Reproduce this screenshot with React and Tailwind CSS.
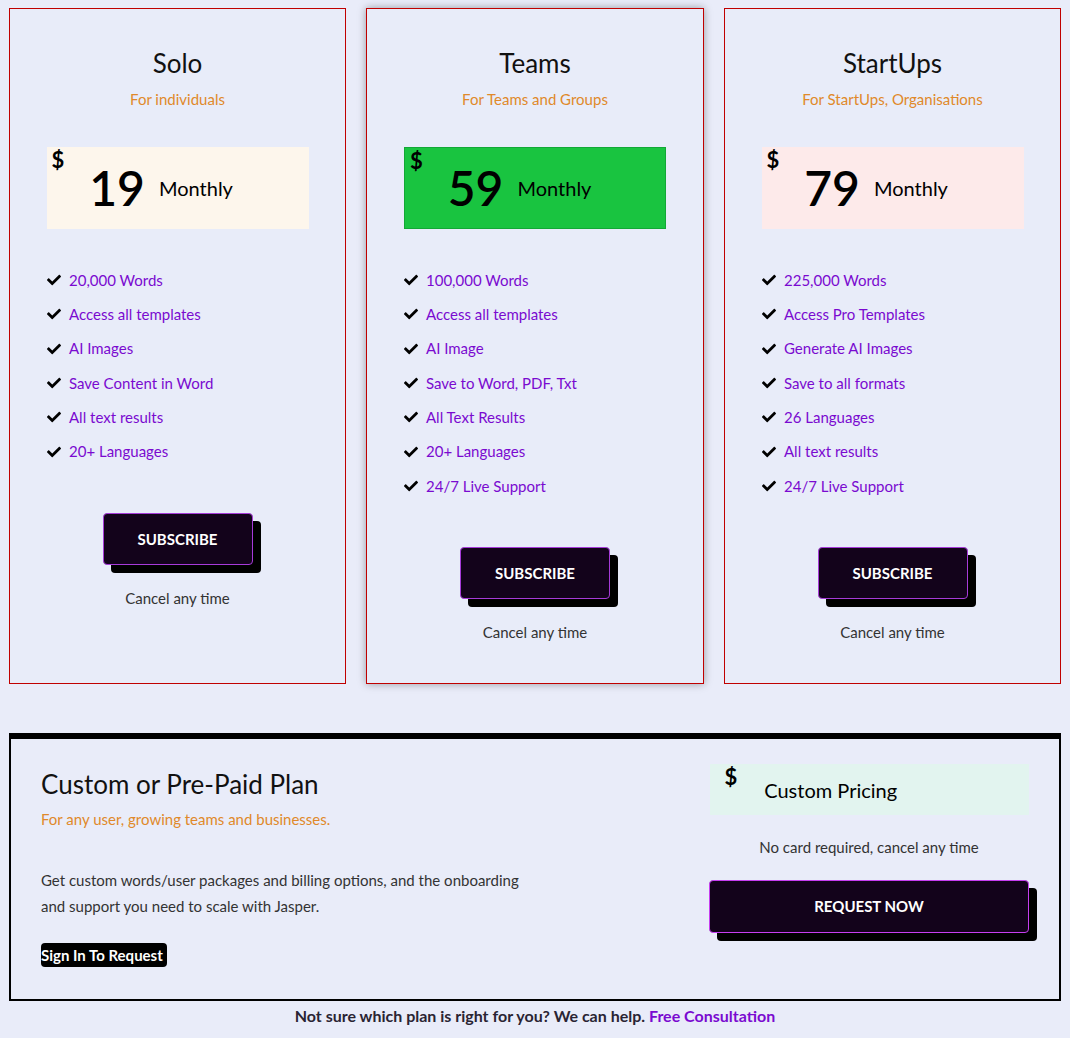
import { FaCheck } from "react-icons/fa";

const plans = [
  {
    name: "Solo",
    tagline: "For individuals",
    price: "19",
    boxClass: "bg-[#fdf6ec]",
    features: [
      "20,000 Words",
      "Access all templates",
      "AI Images",
      "Save Content in Word",
      "All text results",
      "20+ Languages",
    ],
  },
  {
    name: "Teams",
    tagline: "For Teams and Groups",
    price: "59",
    boxClass: "bg-[#19c440] border border-[#12a836]",
    featured: true,
    features: [
      "100,000 Words",
      "Access all templates",
      "AI Image",
      "Save to Word, PDF, Txt",
      "All Text Results",
      "20+ Languages",
      "24/7 Live Support",
    ],
  },
  {
    name: "StartUps",
    tagline: "For StartUps, Organisations",
    price: "79",
    boxClass: "bg-[#fdeaea]",
    features: [
      "225,000 Words",
      "Access Pro Templates",
      "Generate AI Images",
      "Save to all formats",
      "26 Languages",
      "All text results",
      "24/7 Live Support",
    ],
  },
];

function ShadowButton({ label, className = "" }) {
  return (
    <button
      type="button"
      className={`rounded-[4px] border border-[#a63bd8] bg-[#13031b] text-[15px] font-bold uppercase text-white shadow-[8px_8px_0_#000] ${className}`}
    >
      {label}
    </button>
  );
}

function PlanCard({ plan }) {
  return (
    <div
      className={`flex flex-col items-center border border-[#c00000] bg-[#e8ecf9] px-[37px] pb-[41px] pt-[38px] ${
        plan.featured ? "shadow-[0_0_8px_rgba(0,0,0,0.35)]" : ""
      }`}
    >
      <h2 className="text-[26px] leading-[32px] text-[#111]">{plan.name}</h2>
      <p className="mt-[10px] text-[15px] leading-[20px] text-[#e0892a]">{plan.tagline}</p>

      <div className={`mt-[38px] flex h-[82px] w-[262px] items-center ${plan.boxClass}`}>
        <span className="self-start pl-[5px] pt-[1px] text-[22px] font-bold leading-[24px] text-black">$</span>
        <span className="ml-[25px] text-[48px] font-semibold leading-none text-black">{plan.price}</span>
        <span className="ml-[14px] text-[20px] leading-none text-black">Monthly</span>
      </div>

      <ul className="mt-[34px] w-full self-start">
        {plan.features.map((f) => (
          <li key={f} className="flex h-[34.3px] items-center gap-[8px] text-[15px] text-[#7a0ad0]">
            <FaCheck className="h-[14px] w-[14px] text-black" />
            <span>{f}</span>
          </li>
        ))}
      </ul>

      <ShadowButton label="Subscribe" className="mt-[44px] h-[52px] w-[150px] text-[14px]" />
      <p className="mt-[23px] text-[15px] leading-[20px] text-[#333]">Cancel any time</p>
    </div>
  );
}

export default function App() {
  return (
    <div className="min-h-screen bg-[#e9ecf9] px-[9px] pt-[8px] font-['Lato',sans-serif]">
      <div className="grid grid-cols-[337px_338px_337px] gap-5">
        {plans.map((p) => (
          <PlanCard key={p.name} plan={p} />
        ))}
      </div>

      <section className="mt-[49px] flex justify-between border-x-2 border-b-2 border-t-[6px] border-black px-[30px] pb-[32px] pt-[25px]">
        <div className="pt-[4px]">
          <h3 className="text-[26px] leading-[32px] text-[#111]">Custom or Pre-Paid Plan</h3>
          <p className="mt-[9px] text-[15px] leading-[20px] text-[#e0892a]">
            For any user, growing teams and businesses.
          </p>
          <p className="mt-[38px] max-w-[490px] text-[15px] leading-[26px] text-[#333]">
            Get custom words/user packages and billing options, and the onboarding and support you need to scale with Jasper.
          </p>
          <button
            type="button"
            className="mt-[24px] h-[24px] w-[126px] whitespace-nowrap rounded-[4px] bg-black text-left text-[15px] font-bold leading-[20px] text-white"
          >
            Sign In To Request
          </button>
        </div>

        <div className="flex w-[320px] flex-col items-center">
          <div className="flex h-[51px] w-[319px] items-center bg-[#e2f4ef]">
            <span className="self-start pl-[15px] pt-[1px] text-[22px] font-bold leading-[24px] text-black">$</span>
            <span className="ml-[27px] text-[20px] text-black">Custom Pricing</span>
          </div>
          <p className="mt-[22px] text-[15px] leading-[20px] text-[#333]">No card required, cancel any time</p>
          <ShadowButton label="Request Now" className="mt-[23px] h-[53px] w-[320px] border-[#c63ef0]" />
        </div>
      </section>

      <p className="py-[5px] text-center text-[16px] font-bold leading-[20px] text-[#2a2433]">
        Not sure which plan is right for you? We can help.{" "}
        <span className="text-[#7a0ad0]">Free Consultation</span>
      </p>
    </div>
  );
}
